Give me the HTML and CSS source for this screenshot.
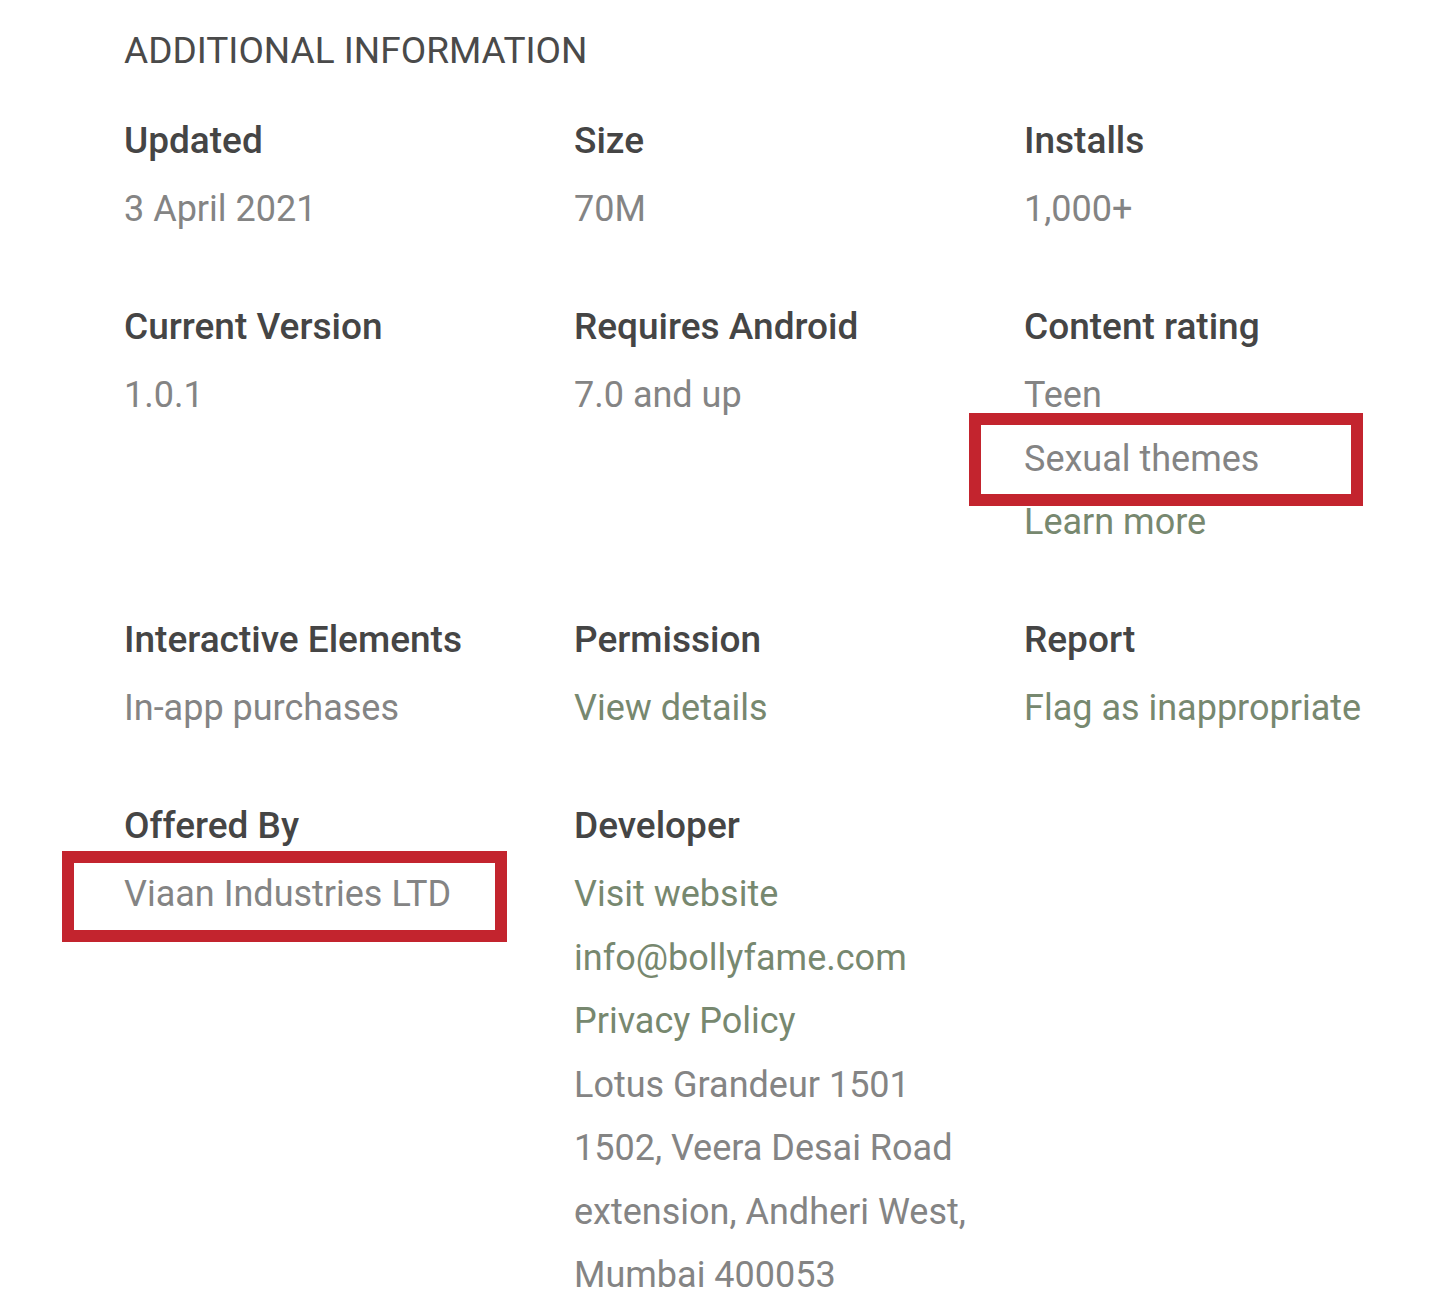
FILE: index.html
```html
<!DOCTYPE html>
<html lang="en">
<head>
<meta charset="utf-8">
<title>Additional Information</title>
<link rel="stylesheet" href="styles.css">
</head>
<body>
<section class="info">
  <h2 class="heading">ADDITIONAL INFORMATION</h2>
  <div class="grid">
    <div class="cell">
      <div class="label">Updated</div>
      <div class="value">3 April 2021</div>
    </div>
    <div class="cell">
      <div class="label">Size</div>
      <div class="value">70M</div>
    </div>
    <div class="cell">
      <div class="label">Installs</div>
      <div class="value">1,000+</div>
    </div>

    <div class="cell">
      <div class="label">Current Version</div>
      <div class="value">1.0.1</div>
    </div>
    <div class="cell">
      <div class="label">Requires Android</div>
      <div class="value">7.0 and up</div>
    </div>
    <div class="cell">
      <div class="label">Content rating</div>
      <div class="value">Teen</div>
      <div class="value"><span class="marked marked-rating">Sexual themes</span></div>
      <div class="value link">Learn more</div>
    </div>

    <div class="cell">
      <div class="label">Interactive Elements</div>
      <div class="value">In-app purchases</div>
    </div>
    <div class="cell">
      <div class="label">Permission</div>
      <div class="value link">View details</div>
    </div>
    <div class="cell">
      <div class="label">Report</div>
      <div class="value link">Flag as inappropriate</div>
    </div>

    <div class="cell">
      <div class="label">Offered By</div>
      <div class="value"><span class="marked marked-offered">Viaan Industries LTD</span></div>
    </div>
    <div class="cell">
      <div class="label">Developer</div>
      <div class="value link">Visit website</div>
      <div class="value link">info@bollyfame.com</div>
      <div class="value link">Privacy Policy</div>
      <div class="value">Lotus Grandeur 1501</div>
      <div class="value">1502, Veera Desai Road</div>
      <div class="value">extension, Andheri West,</div>
      <div class="value">Mumbai 400053</div>
    </div>
  </div>
</section>
</body>
</html>
```

FILE: styles.css
```css
html, body {
  margin: 0;
  padding: 0;
  background: #ffffff;
}

body {
  font-family: Roboto, "Noto Sans", "Liberation Sans", sans-serif;
  -webkit-font-smoothing: antialiased;
}

.info {
  padding: 26px 0 0 124px;
}

.heading {
  margin: 0 0 33px 0;
  font-size: 37px;
  line-height: 50px;
  font-weight: 400;
  color: #4a4a4a;
}

.grid {
  display: grid;
  grid-template-columns: 450px 450px 450px;
  row-gap: 53.5px;
}

.cell {
  display: flex;
  flex-direction: column;
}

.label {
  font-size: 37px;
  line-height: 64px;
  font-weight: 500;
  color: #454545;
  margin-bottom: 5px;
}

.value {
  font-size: 36px;
  line-height: 63.5px;
  font-weight: 400;
  color: #848484;
  white-space: nowrap;
}

.value.link {
  color: #77886f;
}

.marked {
  position: relative;
  display: inline-block;
}

.marked::after {
  content: "";
  position: absolute;
  border: 12px solid #c3242e;
  box-sizing: border-box;
  pointer-events: none;
}

.marked-rating::after {
  left: -55px;
  right: -104px;
  top: -15px;
  bottom: -15px;
}

.marked-offered::after {
  left: -62px;
  right: -56px;
  top: -12px;
  bottom: -15px;
}
```
